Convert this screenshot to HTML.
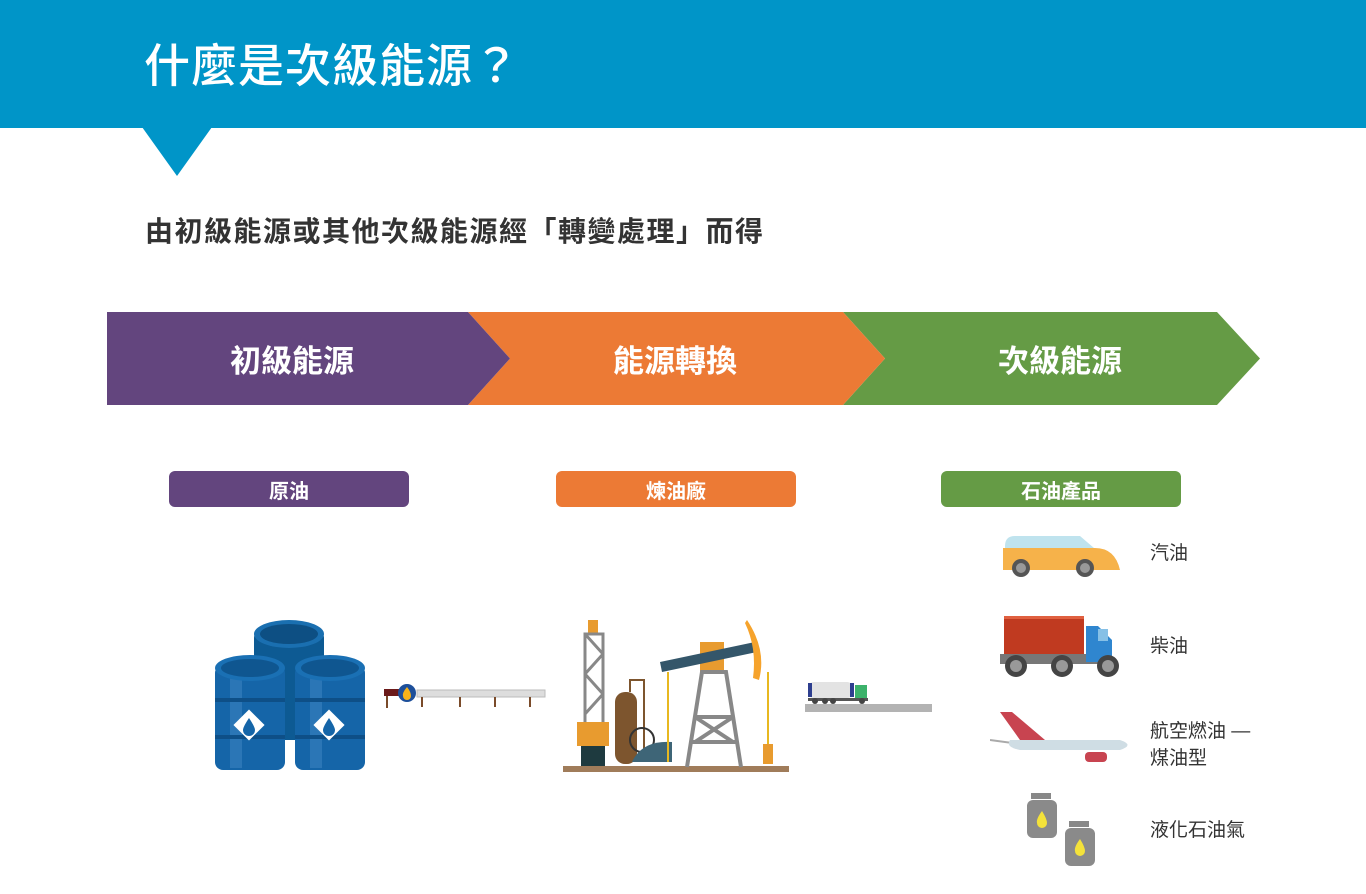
<!DOCTYPE html>
<html><head><meta charset="utf-8">
<style>
*{margin:0;padding:0;box-sizing:border-box}
body{width:1366px;height:894px;background:#fff;position:relative;overflow:hidden;font-family:"Liberation Sans","Noto Sans CJK TC",sans-serif}
.hdr{position:absolute;left:0;top:0;width:1366px;height:128px;background:#0095c8}
.tri{position:absolute;left:142px;top:127px;width:0;height:0;border-left:35px solid transparent;border-right:35px solid transparent;border-top:49px solid #0095c8}
.title{position:absolute;left:144px;top:30px;color:#fff;font-size:46px;letter-spacing:1px;font-weight:500}
.sub{position:absolute;left:145px;top:210px;font-size:28px;color:#333;letter-spacing:1.5px;font-weight:bold}
.bar{position:absolute;top:312px;height:93px;color:#fff;font-size:31px;font-weight:bold;display:flex;align-items:center;justify-content:center}
.pill{position:absolute;top:471px;height:36px;width:240px;border-radius:6px;color:#fff;font-size:20px;font-weight:bold;display:flex;align-items:center;justify-content:center}
.lab{position:absolute;left:1150px;font-size:19px;color:#333}
</style></head><body>
<div class="hdr"></div><div class="tri"></div>
<div class="title">什麼是次級能源？</div>
<div class="sub">由初級能源或其他次級能源經「轉變處理」而得</div>

<svg style="position:absolute;left:0;top:312px" width="1366" height="93">
<polygon points="843,0 1217,0 1260,46.5 1217,93 843,93 885,46.5" fill="#659b45"/>
<polygon points="468,0 843,0 885,46.5 843,93 468,93 510,46.5" fill="#ec7a35"/>
<polygon points="107,0 468,0 510,46.5 468,93 107,93" fill="#63457e"/>
</svg>
<div class="bar" style="left:107px;width:370px">初級能源</div>
<div class="bar" style="left:490px;width:370px">能源轉換</div>
<div class="bar" style="left:870px;width:380px">次級能源</div>

<div class="pill" style="left:169px;background:#63457e">原油</div>
<div class="pill" style="left:556px;background:#ec7a35">煉油廠</div>
<div class="pill" style="left:941px;background:#659b45">石油產品</div>

<svg style="position:absolute;left:210px;top:620px" width="160" height="155">
<g>
<rect x="44" y="10" width="70" height="110" rx="8" fill="#0d5a93"/>
<ellipse cx="79" cy="14" rx="35" ry="14" fill="#1a6fb0"/><ellipse cx="79" cy="14" rx="29" ry="10" fill="#0d4f83"/>
</g>
<g id="b">
<rect x="5" y="45" width="70" height="105" rx="8" fill="#1565a8"/>
<rect x="20" y="50" width="12" height="98" fill="#3b82c0" opacity=".6"/>
<rect x="5" y="78" width="70" height="4" fill="#0e4f87"/><rect x="5" y="115" width="70" height="4" fill="#0e4f87"/>
<ellipse cx="40" cy="48" rx="35" ry="13" fill="#1a70b4"/><ellipse cx="40" cy="48" rx="29" ry="9" fill="#0f5690"/>
<rect x="28" y="94" width="22" height="22" transform="rotate(45 39 105)" fill="#fff"/>
<path d="M39 98 q-6 9 -6 12 a6 6 0 0 0 12 0 q0 -3 -6 -12z" fill="#1565a8"/>
</g>
<use href="#b" x="80" y="0"/>
</svg>

<svg style="position:absolute;left:382px;top:682px" width="166" height="30">
<rect x="2" y="7" width="18" height="7" fill="#6b1a1a"/>
<rect x="35" y="8" width="128" height="7" fill="#ddd" stroke="#bbb"/>
<circle cx="25" cy="11" r="9" fill="#1d4f9a"/><path d="M25 5 q-5 6 -4 9 a4 4 0 0 0 8 0 q0 -4 -4 -9z" fill="#f6b21a"/>
<g stroke="#7a4b2a" stroke-width="2"><path d="M5 14v12M40 15v10M78 15v10M113 15v10M148 15v10"/></g>
</svg>

<svg style="position:absolute;left:560px;top:612px" width="232" height="168">
<rect x="3" y="154" width="226" height="6" fill="#a07c5a"/>
<rect x="28" y="8" width="10" height="14" fill="#e89b2f"/>
<path d="M25 22h18v100h-18z M25 22l18 20M43 42l-18 20M25 62l18 20M43 82l-18 20" stroke="#888" stroke-width="3" fill="none"/>
<rect x="17" y="110" width="32" height="24" fill="#e89b2f"/>
<rect x="21" y="134" width="24" height="20" fill="#1e3a3f"/>
<rect x="55" y="80" width="22" height="72" rx="10" fill="#7d552e"/>
<path d="M70 80v-12h14v80" stroke="#7d552e" stroke-width="2" fill="none"/>
<circle cx="82" cy="128" r="12" fill="none" stroke="#333" stroke-width="2"/>
<path d="M72 150 q10 -22 40 -20 v20z" fill="#3e6577"/>
<rect x="140" y="30" width="24" height="30" fill="#e89b2f"/>
<polygon points="100,50 195,30 197,40 102,60" fill="#34566a"/>
<path d="M127 155 l15 -95 h24 l15 95 M135 105h38M130 130h48M135 105l38 25M173 105l-38 25" stroke="#888" stroke-width="4" fill="none"/>
<path d="M187 8 q20 30 12 60 l-6 -2 q4 -30 -8 -55z" fill="#f6a32c"/>
<path d="M108 60v90M208 60v90" stroke="#e8b820" stroke-width="2"/>
<rect x="203" y="132" width="10" height="20" fill="#e89b2f"/>
</svg>

<svg style="position:absolute;left:805px;top:679px" width="128" height="34">
<rect x="0" y="25" width="127" height="8" fill="#b3b3b3"/>
<rect x="3" y="3" width="45" height="16" rx="6" fill="#e3e3e3"/>
<rect x="3" y="4" width="4" height="14" fill="#2e3f8f"/><rect x="45" y="4" width="4" height="14" fill="#2e3f8f"/>
<rect x="50" y="6" width="12" height="13" fill="#3cb26b"/>
<rect x="3" y="19" width="60" height="3" fill="#555"/>
<circle cx="10" cy="22" r="3" fill="#444"/><circle cx="20" cy="22" r="3" fill="#444"/><circle cx="28" cy="22" r="3" fill="#444"/><circle cx="57" cy="22" r="3" fill="#444"/>
</svg>

<svg style="position:absolute;left:1003px;top:532px" width="118" height="48">
<path d="M2 14 q0 -10 10 -10 h65 l14 12 h-89z" fill="#bfe3ee"/>
<path d="M0 16 h92 q20 0 25 22 h-117z" fill="#f6b24a"/>
<circle cx="18" cy="36" r="9" fill="#555"/><circle cx="18" cy="36" r="5" fill="#999"/>
<circle cx="82" cy="36" r="9" fill="#555"/><circle cx="82" cy="36" r="5" fill="#999"/>
</svg>

<svg style="position:absolute;left:996px;top:614px" width="134" height="66">
<rect x="8" y="2" width="80" height="38" fill="#c03a20"/>
<rect x="8" y="2" width="80" height="3" fill="#e06040"/>
<rect x="4" y="40" width="110" height="10" fill="#777"/>
<path d="M90 12 h12 l14 14 v22 h-26z" fill="#2f86cf"/>
<rect x="102" y="15" width="10" height="12" fill="#86c0e6"/>
<circle cx="20" cy="52" r="11" fill="#444"/><circle cx="20" cy="52" r="6" fill="#999"/>
<circle cx="66" cy="52" r="11" fill="#444"/><circle cx="66" cy="52" r="6" fill="#999"/>
<circle cx="112" cy="52" r="11" fill="#444"/><circle cx="112" cy="52" r="6" fill="#999"/>
</svg>

<svg style="position:absolute;left:990px;top:710px" width="146" height="55">
<polygon points="10,2 30,30 55,30 22,2" fill="#c84450"/>
<path d="M0 30 l30 4" stroke="#aaa" stroke-width="2"/>
<path d="M20 30 h110 q15 5 0 10 h-100 q-15 -3 -10 -10z" fill="#cfdde4"/>
<rect x="95" y="42" width="22" height="10" rx="4" fill="#c84450"/>
</svg>

<svg style="position:absolute;left:1025px;top:793px" width="75" height="76">
<g id="c"><rect x="6" y="0" width="20" height="6" fill="#888"/><rect x="2" y="7" width="30" height="38" rx="6" fill="#8a8a8a"/>
<path d="M17 18 q-6 8 -5 12 a5 5 0 0 0 10 0 q0 -4 -5 -12z" fill="#f4e23a"/></g>
<use href="#c" x="38" y="28"/>
</svg>

<div class="lab" style="top:538px">汽油</div>
<div class="lab" style="top:631px">柴油</div>
<div class="lab" style="top:716px">航空燃油 —<br>煤油型</div>
<div class="lab" style="top:815px">液化石油氣</div>
</body></html>
